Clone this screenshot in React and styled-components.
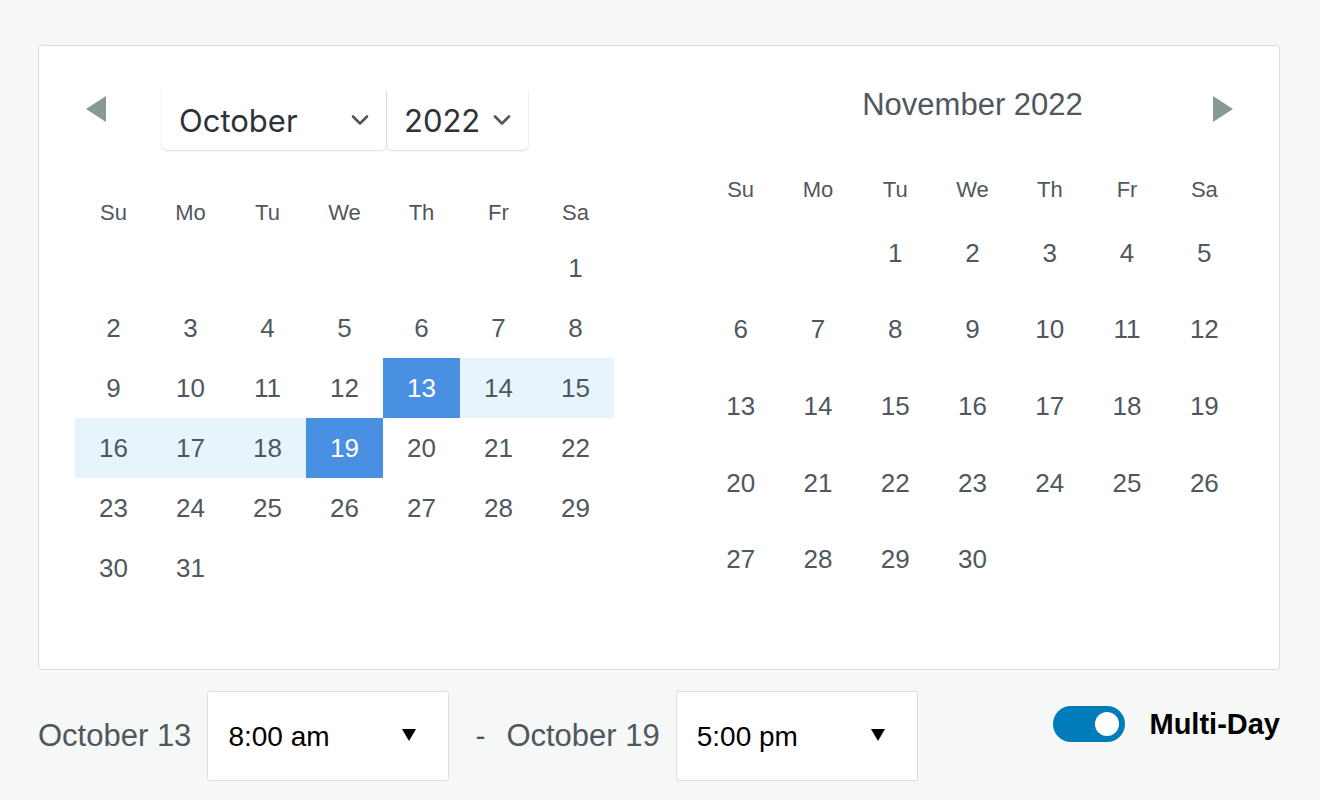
import React, { useState } from 'react';
import styled, { createGlobalStyle } from 'styled-components';

const GlobalStyle = createGlobalStyle`
  html, body {
    margin: 0;
    padding: 0;
    background: #f6f7f7;
    font-family: "Liberation Sans", Arial, sans-serif;
  }
`;

const Page = styled.div`
  padding: 45px 40px 0 38px;
`;

const Card = styled.div`
  background: #fff;
  border: 1px solid #dcdcde;
  border-radius: 4px;
  padding: 0 36px 71px 36px;
  display: flex;
  justify-content: space-between;
`;

const Month = styled.div`
  width: ${(p) => p.$width}px;
  height: 552px;
  display: flex;
  flex-direction: column;
`;

const LeftHeader = styled.div`
  height: 142px;
  flex-shrink: 0;
  box-sizing: border-box;
  padding-top: 44px;
  display: flex;
  align-items: flex-start;
`;

const RightHeader = styled.div`
  height: 119px;
  flex-shrink: 0;
  display: grid;
  grid-template-columns: 1fr auto 1fr;
  align-items: start;
`;

const Title = styled.div`
  grid-column: 2;
  margin-top: 39px;
  line-height: 40px;
  font-size: 31px;
  color: #50575e;
`;

const NavArrow = styled.button`
  border: 0;
  padding: 0;
  background: none;
  cursor: pointer;
  width: 0;
  height: 0;
  border-top: 13px solid transparent;
  border-bottom: 13px solid transparent;
  ${(p) =>
    p.$dir === 'prev'
      ? `border-right: 20px solid #879a97; margin: 6px 56px 0 11px;`
      : `border-left: 20px solid #879a97; margin: 50px 10px 0 0; justify-self: end;`}
`;

const SelectBox = styled.div`
  width: ${(p) => p.$width}px;
  height: 60px;
  box-sizing: border-box;
  padding: 0 16px 0 17px;
  display: flex;
  align-items: center;
  justify-content: space-between;
  border-radius: 0 0 5px 5px;
  box-shadow: 0 1px 2px rgba(0, 0, 0, 0.14), 1px 0 1px rgba(0, 0, 0, 0.03), -1px 0 1px rgba(0, 0, 0, 0.03);
  font-family: Inter, "Liberation Sans", sans-serif;
  font-size: 31px;
  color: #2c3338;
  & + & {
    margin-left: 1px;
  }
`;

const Chevron = () => (
  <svg width="20" height="12" viewBox="0 0 20 12">
    <path d="M3 2.5l7 7 7-7" fill="none" stroke="#50575e" strokeWidth="2.6" strokeLinecap="round" strokeLinejoin="round" />
  </svg>
);

const WeekRow = styled.div`
  height: 50px;
  flex-shrink: 0;
  display: grid;
  grid-template-columns: repeat(7, 1fr);
  align-items: center;
  text-align: center;
  font-size: 22px;
  color: #50575e;
`;

const Days = styled.div`
  flex: 1;
  display: grid;
  grid-template-columns: repeat(7, 1fr);
  grid-template-rows: repeat(${(p) => p.$rows}, 1fr);
`;

const Day = styled.div`
  display: flex;
  align-items: center;
  justify-content: center;
  font-size: 26px;
  color: ${(p) => (p.$state === 'selected' ? '#fff' : '#50575e')};
  background: ${(p) =>
    p.$state === 'selected' ? '#4a90e2' : p.$state === 'range' ? '#e8f4fb' : 'transparent'};
`;

const Footer = styled.div`
  display: flex;
  align-items: center;
  margin-top: 21px;
  height: 90px;
`;

const DateLabel = styled.span`
  font-size: 31px;
  color: #50575e;
  margin-right: 16px;
`;

const Dash = styled.span`
  font-size: 30px;
  color: #50575e;
  margin: 0 21px 0 26px;
`;

const TimeSelect = styled.div`
  width: 242px;
  height: 90px;
  box-sizing: border-box;
  border: 1px solid #dcdcde;
  border-radius: 3px;
  background: #fff;
  padding: 2px 32px 0 20px;
  display: flex;
  align-items: center;
  justify-content: space-between;
  font-size: 28px;
  color: #000;
`;

const Caret = styled.span`
  width: 0;
  height: 0;
  border-left: 7px solid transparent;
  border-right: 7px solid transparent;
  border-top: 12px solid #000;
  margin-top: -4px;
`;

const ToggleGroup = styled.label`
  margin-left: auto;
  align-self: flex-start;
  margin-top: 15px;
  display: flex;
  align-items: center;
  cursor: pointer;
`;

const Track = styled.span`
  width: 72px;
  height: 36px;
  border-radius: 18px;
  background: ${(p) => (p.$on ? '#007cba' : '#949494')};
  display: flex;
  align-items: center;
  justify-content: ${(p) => (p.$on ? 'flex-end' : 'flex-start')};
  padding: 0 6px;
  box-sizing: border-box;
`;

const Knob = styled.span`
  width: 24px;
  height: 24px;
  border-radius: 50%;
  background: #fff;
`;

const ToggleText = styled.span`
  margin-left: 25px;
  font-size: 29px;
  font-weight: bold;
  color: #000;
`;

const WEEKDAYS = ['Su', 'Mo', 'Tu', 'We', 'Th', 'Fr', 'Sa'];

const buildCells = (offset, count, start, end) => {
  const cells = [];
  for (let i = 0; i < offset; i++) cells.push({ key: `e${i}` });
  for (let d = 1; d <= count; d++) {
    let state = null;
    if (start && (d === start || d === end)) state = 'selected';
    else if (start && d > start && d < end) state = 'range';
    cells.push({ key: d, day: d, state });
  }
  return cells;
};

const MonthGrid = ({ cells, rows }) => (
  <>
    <WeekRow>
      {WEEKDAYS.map((w) => (
        <span key={w}>{w}</span>
      ))}
    </WeekRow>
    <Days $rows={rows}>
      {cells.map((c) => (
        <Day key={c.key} $state={c.state}>
          {c.day}
        </Day>
      ))}
    </Days>
  </>
);

export default function App() {
  const [multiDay, setMultiDay] = useState(true);
  const october = buildCells(6, 31, 13, 19);
  const november = buildCells(2, 30);

  return (
    <Page>
      <GlobalStyle />
      <Card>
        <Month $width={539}>
          <LeftHeader>
            <NavArrow $dir="prev" aria-label="Previous month" />
            <SelectBox $width={224}>
              October
              <Chevron />
            </SelectBox>
            <SelectBox $width={141}>
              2022
              <Chevron />
            </SelectBox>
          </LeftHeader>
          <MonthGrid cells={october} rows={6} />
        </Month>
        <Month $width={541}>
          <RightHeader>
            <Title>November 2022</Title>
            <NavArrow $dir="next" aria-label="Next month" />
          </RightHeader>
          <MonthGrid cells={november} rows={5} />
        </Month>
      </Card>
      <Footer>
        <DateLabel>October 13</DateLabel>
        <TimeSelect>
          8:00 am
          <Caret />
        </TimeSelect>
        <Dash>-</Dash>
        <DateLabel>October 19</DateLabel>
        <TimeSelect>
          5:00 pm
          <Caret />
        </TimeSelect>
        <ToggleGroup onClick={() => setMultiDay(!multiDay)}>
          <Track $on={multiDay}>
            <Knob />
          </Track>
          <ToggleText>Multi-Day</ToggleText>
        </ToggleGroup>
      </Footer>
    </Page>
  );
}
